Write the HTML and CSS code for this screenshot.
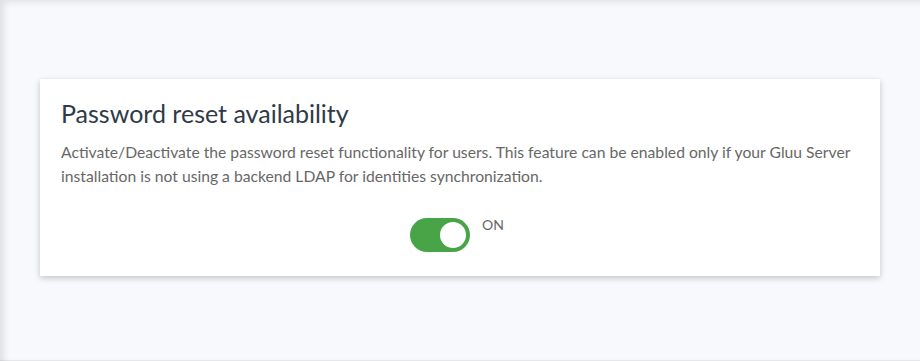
FILE: index.html
```html
<!DOCTYPE html>
<html lang="en">
<head>
    <meta charset="UTF-8">
    <meta name="viewport" content="width=device-width, initial-scale=1.0">
    <title>Password reset</title>
    <link rel="stylesheet" href="styles.css">
</head>
<body>

    <div class="page">
        <div class="card">
            <h2 class="card-title">Password reset availability</h2>
            <p class="card-text">Activate/Deactivate the password reset functionality for users. This feature can be enabled only if your Gluu Server installation is not using a backend LDAP for identities synchronization.</p>

            <div class="switch-row">
                <label class="switch">
                    <input type="checkbox" checked>
                    <span class="slider"></span>
                </label>
                <span class="switch-label">ON</span>
            </div>
        </div>
    </div>

</body>
</html>
```

FILE: styles.css
```css
html, body {
    margin: 0;
    padding: 0;
}

body {
    font-family: Lato, 'Open Sans', sans-serif;
    background-color: #f8f9fd;
}

/* Page area with the soft inset edge */
.page {
    height: 361px;
    box-sizing: border-box;
    padding: 79px 40px 0 40px;
    box-shadow: inset 7px 5px 7px -3px rgba(0, 0, 0, 0.1), inset 0 -2px 1px -1px rgba(0, 0, 0, 0.08);
}

/* Card */
.card {
    background-color: #fff;
    padding: 19px 21px 24px 21px;
    box-shadow: 0 2px 6px rgba(0, 0, 0, 0.22);
}

.card-title {
    margin: 0;
    font-size: 25px;
    font-weight: normal;
    line-height: 30px;
    color: #2e3a48;
}

.card-text {
    margin: 12px 0 0 0;
    font-size: 15.7px;
    line-height: 24px;
    color: #676767;
}

/* Toggle switch */
.switch-row {
    display: flex;
    justify-content: center;
    align-items: flex-start;
    gap: 12px;
    margin-top: 30px;
    padding-right: 6px;
}

.switch {
    position: relative;
    display: inline-block;
    width: 60px;
    height: 34px;
}

.switch input {
    opacity: 0;
    width: 0;
    height: 0;
}

.slider {
    position: absolute;
    inset: 0;
    background-color: #ccc;
    border-radius: 34px;
    cursor: pointer;
}

.slider::before {
    content: "";
    position: absolute;
    left: 4px;
    top: 4px;
    width: 26px;
    height: 26px;
    border-radius: 50%;
    background-color: #fff;
    transition: transform 0.3s;
}

.switch input:checked + .slider {
    background-color: #47a548;
}

.switch input:checked + .slider::before {
    transform: translateX(26px);
}

.switch-label {
    font-size: 14px;
    line-height: 14px;
    color: #666;
}
```
